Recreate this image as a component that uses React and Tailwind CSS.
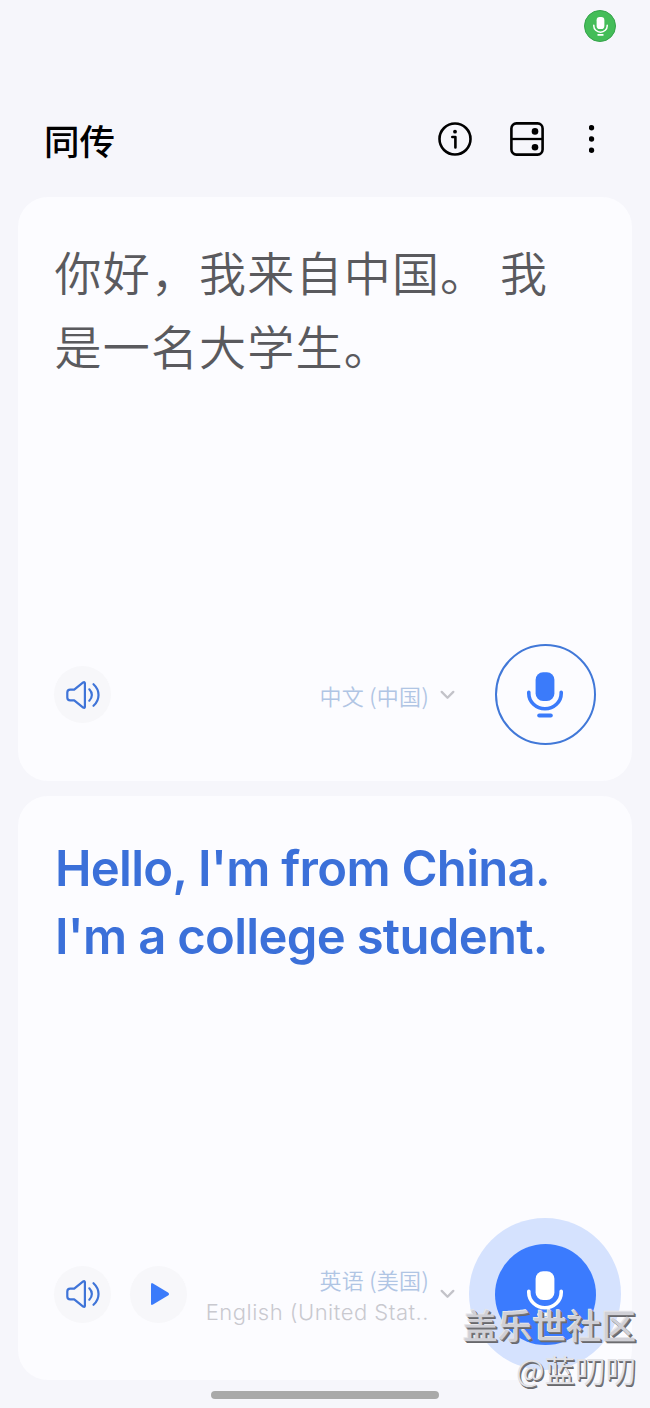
import React from 'react';

const MicIcon = ({ className }) => (
  <svg className={className} viewBox="0 0 36 46" fill="none">
    <rect x="8.6" y="0.3" width="18.8" height="28.7" rx="7.5" fill="currentColor" />
    <path d="M1.8 20.2V21.5a16.2 15.2 0 0 0 32.4 0V20.2" stroke="currentColor" strokeWidth="3.6" strokeLinecap="round" />
    <path d="M12.2 43.4h11.6" stroke="currentColor" strokeWidth="4" strokeLinecap="round" />
  </svg>
);

const SpeakerIcon = () => (
  <svg className="w-[34px] h-[28px] text-[#3f74d8]" viewBox="0 0 34 28" fill="none" stroke="currentColor" strokeWidth="2.2" strokeLinecap="round" strokeLinejoin="round">
    <path d="M4.2 8.6H8.2L17.2 1.4Q18.7 0.6 18.9 2.2V25.8Q18.7 27.4 17.2 26.6L8.2 19.4H4.2Q1.3 19.4 1.3 16.6V11.4Q1.3 8.6 4.2 8.6Z" />
    <path d="M23.3 8.3C26.7 11.7 26.7 16.3 23.3 19.7" />
    <path d="M27.5 3.2C34.2 9.3 34.2 18.7 27.5 24.8" />
  </svg>
);

const ChevronIcon = () => (
  <svg className="w-[15px] h-[10px] text-[#c3c3c9]" viewBox="0 0 15 10" fill="none" stroke="currentColor" strokeWidth="2.3" strokeLinecap="round" strokeLinejoin="round">
    <path d="M1.7 1.9L7.5 7.7L13.3 1.9" />
  </svg>
);

const RoundButton = ({ label, children }) => (
  <button type="button" aria-label={label} className="w-[57px] h-[57px] shrink-0 rounded-full bg-[#f7f7fa] flex items-center justify-center">
    {children}
  </button>
);

const Header = () => (
  <header className="h-[197px] flex flex-col">
    <div className="h-[52px] flex items-center justify-end pr-[34px]">
      <span className="w-8 h-8 rounded-full bg-[#44bd58] border border-[#35a34a] flex items-center justify-center text-white">
        <MicIcon className="w-[15px] h-[19px]" />
      </span>
    </div>
    <div className="mt-[51px] h-[72px] pl-[44px] pr-[55px] flex items-center">
      <h1 className="flex-1 text-[35.5px] leading-none font-medium text-black mt-[2px]">同传</h1>
      <svg className="w-[34px] h-[34px]" viewBox="0 0 34 34" fill="none" stroke="black" strokeWidth="2.6" strokeLinecap="round" strokeLinejoin="round">
        <circle cx="17" cy="17" r="15.5" />
        <circle cx="17" cy="9.7" r="1.9" fill="black" stroke="none" />
        <path d="M14.3 15H17.4V25.5" />
      </svg>
      <svg className="w-[34px] h-[34px] ml-[38px]" viewBox="0 0 34 34" fill="none" stroke="black" strokeWidth="2.6">
        <rect x="1.4" y="1.4" width="31.2" height="31.2" rx="5" />
        <path d="M2 17H32" strokeWidth="2.3" />
        <circle cx="25" cy="9.4" r="3.3" fill="black" stroke="none" />
        <circle cx="25" cy="25.2" r="3.3" fill="black" stroke="none" />
      </svg>
      <svg className="w-[6px] h-[30px] ml-[45px]" viewBox="0 0 6 30" fill="black">
        <circle cx="2.5" cy="3.7" r="2.7" />
        <circle cx="2.5" cy="15" r="2.7" />
        <circle cx="2.5" cy="26.3" r="2.7" />
      </svg>
    </div>
  </header>
);

const App = () => {
  return (
    <div className="relative w-[650px] h-[1408px] overflow-hidden bg-[#f6f6fb] flex flex-col font-['Noto_Sans_CJK_SC',sans-serif]">
      <Header />

      <main className="mx-[18px] flex flex-col gap-[15px]">
        <section className="h-[584px] rounded-[30px] bg-[#fcfcff] pl-[36px] pr-[36.5px] pt-[37px] pb-[36px] flex flex-col justify-between">
          <p className="pl-[0.5px] text-[47px] leading-[74px] tracking-[1.2px] font-[350] text-[#5a5a5e] whitespace-nowrap">
            你好，我来自中国。 我<br />是一名大学生。
          </p>
          <div className="h-[101px] flex items-center">
            <RoundButton label="播放声音"><SpeakerIcon /></RoundButton>
            <div className="flex-1 flex items-center justify-end gap-[11px] pr-[39.5px]">
              <span className="text-[22px] leading-[32px] tracking-[0.3px] font-[350] text-[#b0c5e4]">中文 (中国)</span>
              <ChevronIcon />
            </div>
            <button type="button" aria-label="中文" className="w-[101px] h-[101px] shrink-0 rounded-full border-2 border-[#4178d8] text-[#3b7bfa] flex items-center justify-center">
              <MicIcon className="w-[36px] h-[46px]" />
            </button>
          </div>
        </section>

        <section className="h-[584px] rounded-[30px] bg-[#fcfcff] pl-[36px] pr-[36.5px] pt-[39px] pb-[35.5px] flex flex-col justify-between">
          <p className="pl-[1px] text-[49px] leading-[68px] font-semibold text-[#3b70d9] font-['Inter',sans-serif] tracking-[-0.7px] whitespace-nowrap">
            Hello, I'm from China.<br />I'm a college student.
          </p>
          <div className="h-[101px] flex items-center">
            <RoundButton label="播放声音"><SpeakerIcon /></RoundButton>
            <div className="ml-[19px] flex">
              <RoundButton label="播放">
                <svg className="w-[20px] h-[24px] ml-[3px]" viewBox="0 0 20 24" fill="#3b7bfa">
                  <path d="M1 2.6Q1 .3 3 1.4L18 10.4Q20 12 18 13.6L3 22.6Q1 23.7 1 21.4Z" />
                </svg>
              </RoundButton>
            </div>
            <div className="flex-1 flex items-center justify-end gap-[11px] pr-[39.5px]">
              <div className="flex flex-col items-end whitespace-nowrap pt-[5px]">
                <span className="text-[22px] leading-[32px] tracking-[0.3px] font-[350] text-[#b0c5e4]">英语 (美国)</span>
                <span className="text-[22px] leading-[35px] text-[#c9c9cf] font-['Inter',sans-serif] font-[350] tracking-[0.5px]">English (United Stat..</span>
              </div>
              <ChevronIcon />
            </div>
            <div className="relative w-[101px] h-[101px] shrink-0">
              <span className="absolute -inset-[25.5px] rounded-full bg-[#d5e2fe]" />
              <button type="button" aria-label="英语" className="relative w-full h-full rounded-full bg-[#3b7bfe] text-white flex items-center justify-center">
                <MicIcon className="w-[36px] h-[46px]" />
              </button>
            </div>
          </div>
        </section>
      </main>

      <div className="mt-[10.5px] ml-[211px] w-[228px] h-[8px] rounded-full bg-[#a9a9a9]" />

      <div className="absolute right-[14px] bottom-[17px] flex flex-col items-end text-right whitespace-nowrap text-[#d0d0d6]">
        <span className="text-[34.6px] leading-[46px] font-medium [text-shadow:1px_1px_0_#77777b,2px_2px_0_#68686c,-1px_-1px_0_#e6e6ea]">盖乐世社区</span>
        <span className="text-[30.5px] leading-[44px] font-[350] text-[#e2e2e6] [text-shadow:1px_1px_0_#77777b,1.5px_1.5px_0_#68686c]">@蓝叨叨</span>
      </div>
    </div>
  );
};

export default App;
